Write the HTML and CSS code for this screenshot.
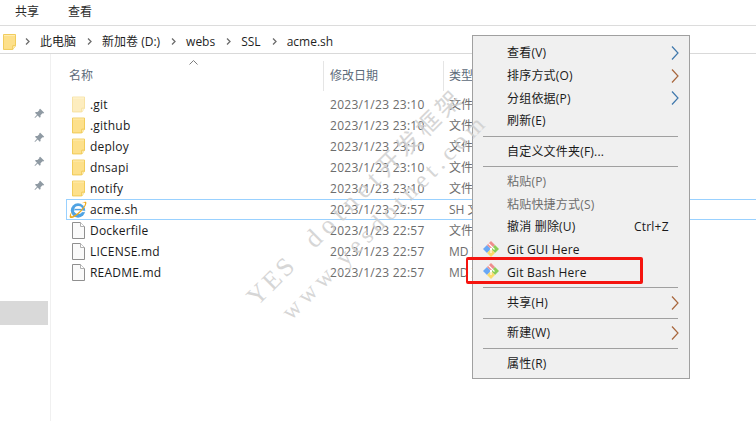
FILE: index.html
```html
<!DOCTYPE html>
<html lang="zh">
<head>
<meta charset="utf-8">
<title>acme.sh</title>
<link rel="stylesheet" href="styles.css">
</head>
<body>
<svg class="defs" width="0" height="0" aria-hidden="true">
  <defs>
    <symbol id="folder" viewBox="0 0 14 17">
      <path d="M.5.5h13v12l-3 4H.5z" fill="#fde08b" stroke="#efc74f"/>
      <path d="M10.5 16.5v-4h3" fill="#fff3c8" stroke="#efc74f"/>
      <path d="M1 1h12v1H1z" fill="#ffeeb5"/>
    </symbol>
    <symbol id="file" viewBox="0 0 13 17">
      <path d="M.5.5h8l4 4v12H.5z" fill="#fafafa" stroke="#8f8f8f"/>
      <path d="M8.5.5v4h4" fill="#fff" stroke="#b0b0b0"/>
    </symbol>
    <symbol id="pin" viewBox="0 0 11 11">
      <path d="M6.2.8l4 4-1 .7-.7-.3-2 2 .1 1.7-.9.8-2-2.1L1 10l-.5-.5 2.500-2.700-2-2 .8-.9 1.700.1 2-2-.3-.7z" fill="#8f9aa3"/>
    </symbol>
    <symbol id="chev" viewBox="0 0 8 14">
      <path d="M1 .5l6 6.500-6 6.500" fill="none" stroke="currentColor" stroke-width="1.200"/>
    </symbol>
    <symbol id="crumb" viewBox="0 0 5 7">
      <path d="M1 .5l3 3-3 3" fill="none" stroke="#6d6d6d" stroke-width="1.300"/>
    </symbol>
    <symbol id="git" viewBox="0 0 16 16">
      <path d="M0 8l4-4 4 4-4 4z" fill="#6aa8f5"/>
      <path d="M4 4l4-4 4 4-4 4z" fill="#ef8d8d"/>
      <path d="M8 8l4-4 4 4-4 4z" fill="#8ccf57"/>
      <path d="M4 12l4-4 4 4-4 4z" fill="#fbdc6a"/>
      <path d="M5.500 2.500l6 6M8 8v4" stroke="#fff" stroke-width="1.100" fill="none"/>
      <circle cx="8" cy="8" r="1.200" fill="#fff"/>
    </symbol>
  </defs>
</svg>

<header class="toolbar">
  <span class="tab">共享</span>
  <span class="tab">查看</span>
</header>

<nav class="address">
  <svg class="addr-folder"><use href="#folder"/></svg>
  <svg class="crumb"><use href="#crumb"/></svg><span>此电脑</span>
  <svg class="crumb"><use href="#crumb"/></svg><span>新加卷 (D:)</span>
  <svg class="crumb"><use href="#crumb"/></svg><span>webs</span>
  <svg class="crumb"><use href="#crumb"/></svg><span>SSL</span>
  <svg class="crumb"><use href="#crumb"/></svg><span>acme.sh</span>
</nav>

<main class="content">
  <aside class="nav">
    <div class="pins">
      <svg class="pin"><use href="#pin"/></svg>
      <svg class="pin"><use href="#pin"/></svg>
      <svg class="pin"><use href="#pin"/></svg>
      <svg class="pin"><use href="#pin"/></svg>
    </div>
    <div class="nav-selected"></div>
  </aside>

  <section class="list">
    <div class="list-head">
      <span class="col-name">名称<svg class="sort" viewBox="0 0 9 5"><path d="M.5 4.500l4-4 4 4" fill="none" stroke="#7d7d7d"/></svg></span>
      <span class="col-date">修改日期</span>
      <span class="col-type">类型</span>
    </div>
    <div class="row"><svg class="ico faded"><use href="#folder"/></svg><span class="name">.git</span><span class="date">2023/1/23 23:10</span><span class="type">文件夹</span></div>
    <div class="row"><svg class="ico"><use href="#folder"/></svg><span class="name">.github</span><span class="date">2023/1/23 23:10</span><span class="type">文件夹</span></div>
    <div class="row"><svg class="ico"><use href="#folder"/></svg><span class="name">deploy</span><span class="date">2023/1/23 23:10</span><span class="type">文件夹</span></div>
    <div class="row"><svg class="ico"><use href="#folder"/></svg><span class="name">dnsapi</span><span class="date">2023/1/23 23:10</span><span class="type">文件夹</span></div>
    <div class="row"><svg class="ico"><use href="#folder"/></svg><span class="name">notify</span><span class="date">2023/1/23 23:10</span><span class="type">文件夹</span></div>
    <div class="row current">
      <svg class="ico-ie" viewBox="0 0 17 17">
        <circle cx="8.500" cy="9" r="6.800" fill="#4fa3e3"/>
        <circle cx="8.800" cy="8.500" r="3.800" fill="#fff"/>
        <path d="M5.200 7.400h7.200v1.500H5.200z" fill="#4fa3e3"/>
        <path d="M5 9.200h10v1.300H5z" fill="#fff"/>
        <path d="M16 .8c1.500 1.200-1 5.700-5.200 9.800S2.500 17 1 15.800c-1.100-1 .4-4 1.500-5.600 -.5 1.800-.8 3.600-.2 4.100 1 .8 4.800-1.600 8-4.800s5.400-6.300 4.800-7.500c-.4-.7-1.700-.5-3.200.1 1.900-1.100 3.700-1.800 5.100-1.300z" fill="#f0ab1e"/>
      </svg>
      <span class="name">acme.sh</span><span class="date">2023/1/23 22:57</span><span class="type">SH 文件</span>
    </div>
    <div class="row"><svg class="ico"><use href="#file"/></svg><span class="name">Dockerfile</span><span class="date">2023/1/23 22:57</span><span class="type">文件</span></div>
    <div class="row"><svg class="ico"><use href="#file"/></svg><span class="name">LICENSE.md</span><span class="date">2023/1/23 22:57</span><span class="type">MD 文件</span></div>
    <div class="row"><svg class="ico"><use href="#file"/></svg><span class="name">README.md</span><span class="date">2023/1/23 22:57</span><span class="type">MD 文件</span></div>
  </section>
</main>

<div class="menu">
  <div class="item">查看(V)<svg class="arrow blue"><use href="#chev"/></svg></div>
  <div class="item">排序方式(O)<svg class="arrow orange"><use href="#chev"/></svg></div>
  <div class="item">分组依据(P)<svg class="arrow blue"><use href="#chev"/></svg></div>
  <div class="item">刷新(E)</div>
  <hr class="sep">
  <div class="item">自定义文件夹(F)...</div>
  <hr class="sep">
  <div class="item off">粘贴(P)</div>
  <div class="item off">粘贴快捷方式(S)</div>
  <div class="item">撤消 删除(U)<span class="key">Ctrl+Z</span></div>
  <div class="item"><svg class="git"><use href="#git"/></svg>Git GUI Here</div>
  <div class="item"><svg class="git"><use href="#git"/></svg>Git Bash Here</div>
  <hr class="sep">
  <div class="item">共享(H)<svg class="arrow orange"><use href="#chev"/></svg></div>
  <hr class="sep">
  <div class="item">新建(W)<svg class="arrow orange"><use href="#chev"/></svg></div>
  <hr class="sep">
  <div class="item">属性(R)</div>
</div>

<div class="watermark wm-a">YES <span class="wm-latin">dotnet</span><span class="wm-cjk">开发框架</span></div>
<div class="watermark wm-b">www.yesdotnet.com</div>

<div class="redbox"></div>
</body>
</html>
```

FILE: styles.css
```css
* { box-sizing: border-box; }
html, body { margin: 0; height: 100%; }
body {
  width: 756px;
  height: 421px;
  overflow: hidden;
  position: relative;
  background: #fff;
  color: #1a1a1a;
  font: 12px/16px "Open Sans", "Noto Sans CJK SC", sans-serif;
  display: flex;
  flex-direction: column;
}
.defs { position: absolute; }

.toolbar {
  height: 26px;
  flex: none;
  display: flex;
  align-items: center;
  gap: 29px;
  padding: 0 0 2px 15px;
  border-bottom: 1px solid #dcdcdc;
}
.tab { color: #2b2b2b; font-size: 12px; }

.address {
  height: 28px;
  flex: none;
  display: flex;
  align-items: center;
  border-bottom: 1px solid #d9d9d9;
  color: #1f1f1f;
  font-size: 12px;
  padding: 4px 0 0 3px;
}
.addr-folder { width: 13px; height: 16px; margin-right: 9px; }
.crumb { width: 5px; height: 7px; margin-right: 10px; }
.address span { margin-right: 11px; }

.content { flex: 1; display: flex; min-height: 0; }

.nav {
  width: 51px;
  flex: none;
  border-right: 1px solid #f0f0f0;
  display: flex;
  flex-direction: column;
  padding-top: 54px;
}
.pins {
  display: flex;
  flex-direction: column;
  gap: 13px;
  padding-left: 34px;
}
.pin { width: 11px; height: 11px; }
.nav-selected {
  width: 48px;
  height: 24px;
  margin-top: 110px;
  background: #d9d9d9;
}

.list { flex: 1; padding: 7px 0 0 15px; min-width: 0; }
.list-head {
  height: 30px;
  display: grid;
  grid-template-columns: 257px 120px 1fr;
  color: #5d6b7a;
  margin-bottom: 3px;
}
.list-head span {
  display: flex;
  align-items: center;
  padding-left: 6px;
  position: relative;
}
.col-name { padding-left: 3px !important; }
.col-date, .col-type { border-left: 1px solid #e5e5e5; }
.list-head .col-type { padding-left: 5px; }
.sort {
  position: absolute;
  left: 123px;
  top: -1px;
  width: 9px;
  height: 5px;
}

.row {
  height: 21px;
  display: grid;
  grid-template-columns: 23px 240px 119px 1fr;
  align-items: center;
  border: 1px solid transparent;
  border-width: 1px 0 1px 1px;
}
.row.current { border-color: #99d1ff; }
.ico { width: 13px; height: 17px; margin-left: 5px; display: block; }
.ico.faded { opacity: .55; }
.ico-ie { width: 18px; height: 18px; margin-left: 2px; display: block; }
.name { color: #1a1a1a; letter-spacing: .2px; }
.date, .type { color: #6d6d6d; white-space: nowrap; }
.date { letter-spacing: .27px; }

.watermark {
  position: absolute;
  color: #cfcfcf;
  font-family: "Liberation Serif", "Noto Sans CJK SC", serif;
  font-weight: 400;
  line-height: 30px;
  white-space: nowrap;
  transform-origin: left bottom;
  transform: rotate(-45deg);
  opacity: .85;
}
.wm-a { left: 262px; top: 282px; font-size: 26px; letter-spacing: 3px; word-spacing: 14px; }
.wm-latin { letter-spacing: 6px; }
.wm-cjk { font-size: 24px; letter-spacing: 4px; }
.wm-b { left: 296px; top: 296px; font-size: 24px; letter-spacing: 5px; }

.menu {
  position: absolute;
  left: 472px;
  top: 35px;
  width: 218px;
  height: 344px;
  background: #f0f0f0;
  border: 1px solid #a0a0a0;
  padding: 6px 2px 3px;
  color: #1a1a1a;
}
.item {
  height: 22.700px;
  display: flex;
  align-items: center;
  position: relative;
  padding-left: 32px;
  font-size: 12px;
  letter-spacing: .2px;
}
.item.off { color: #6d6d6d; }
.key { position: absolute; left: 159px; }
.git { position: absolute; left: 8px; top: 2px; width: 16px; height: 16px; }
.arrow {
  position: absolute;
  left: 196px;
  top: 4px;
  width: 8px;
  height: 14px;
}
.arrow.blue { color: #3f78ac; }
.arrow.orange { color: #a8663c; }
.sep {
  margin: 3.300px 9px 3.300px 8px;
  border: 0;
  height: 1px;
  background: #a0a0a0;
}

.redbox {
  position: absolute;
  left: 466px;
  top: 257px;
  width: 177px;
  height: 27px;
  border: 3px solid #f5140f;
  border-left-width: 2px;
  border-radius: 2px;
}
```
